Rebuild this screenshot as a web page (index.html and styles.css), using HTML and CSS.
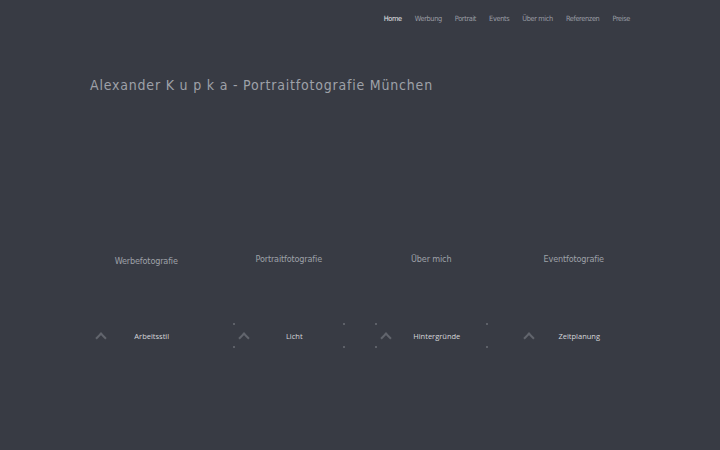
FILE: index.html
```html
<!DOCTYPE html>
<html lang="de">
<head>
    <meta charset="UTF-8">
    <meta name="viewport" content="width=device-width, initial-scale=1.0">
    <title>Alexander Kupka - Portraitfotografie München</title>
    <link rel="stylesheet" href="styles.css">
</head>
<body>
    <div class="wrap">
        <nav class="nav">
            <a href="#" class="active">Home</a>
            <a href="#">Werbung</a>
            <a href="#">Portrait</a>
            <a href="#">Events</a>
            <a href="#">Über mich</a>
            <a href="#">Referenzen</a>
            <a href="#">Preise</a>
        </nav>

        <h1 class="title">Alexander K u p k a - Portraitfotografie München</h1>

        <div class="cols">
            <h2>Werbefotografie</h2>
            <h2>Portraitfotografie</h2>
            <h2>Über mich</h2>
            <h2>Eventfotografie</h2>
        </div>

        <div class="cols tabs">
            <div class="tab"><span class="chev"></span><span class="label">Arbeitsstil</span></div>
            <div class="tab marked"><span class="chev"></span><span class="label">Licht</span></div>
            <div class="tab marked"><span class="chev"></span><span class="label">Hintergründe</span></div>
            <div class="tab"><span class="chev"></span><span class="label">Zeitplanung</span></div>
        </div>
    </div>
</body>
</html>
```

FILE: styles.css
```css
body {
    margin: 0;
    background: #383b44;
    font-family: "DejaVu Sans Condensed", "Liberation Sans", sans-serif;
    color: #9a9da4;
}

.wrap {
    width: 540px;
    margin: 0 auto;
}

.nav {
    display: flex;
    justify-content: flex-end;
    gap: 13px;
    padding-top: 14px;
    height: 12px;
    font-size: 7.3px;
    letter-spacing: -0.35px;
}

.nav a {
    color: #9a9da4;
    text-decoration: none;
}

.nav a.active {
    color: #e4e5e8;
}

.title {
    margin: 49px 0 0;
    font-size: 14px;
    font-weight: normal;
    letter-spacing: 0.8px;
    line-height: 20px;
    color: #9ea1a8;
}

.cols {
    display: grid;
    grid-template-columns: repeat(4, 1fr);
    gap: 30px;
}

.cols h2 {
    margin: 157px 0 0;
    font-size: 9px;
    letter-spacing: -0.15px;
    font-weight: normal;
    text-align: center;
    line-height: 14px;
    color: #9ea1a8;
}

.cols h2:first-child {
    margin-top: 159px;
}

.tabs {
    margin-top: 55px;
}

.tab {
    position: relative;
    display: flex;
    align-items: center;
    height: 25px;
    font-family: "Open Sans", "DejaVu Sans", sans-serif;
    font-size: 7.5px;
    color: #d6d7db;
}

.chev {
    width: 6px;
    height: 6px;
    margin: 4px 0 0 7px;
    border-top: 2px solid #62656d;
    border-left: 2px solid #62656d;
    transform: rotate(45deg);
}

.label {
    flex: 1;
    text-align: center;
    padding-right: 4px;
}

/* faint corner marks */
.marked::before {
    content: "";
    position: absolute;
    top: 0;
    bottom: 0;
    left: 0;
    width: 100%;
    background:
        linear-gradient(#5d6068, #5d6068) left top / 2px 2px no-repeat,
        linear-gradient(#5d6068, #5d6068) right top / 2px 2px no-repeat,
        linear-gradient(#5d6068, #5d6068) left bottom / 2px 2px no-repeat,
        linear-gradient(#5d6068, #5d6068) right bottom / 2px 2px no-repeat;
}
```
